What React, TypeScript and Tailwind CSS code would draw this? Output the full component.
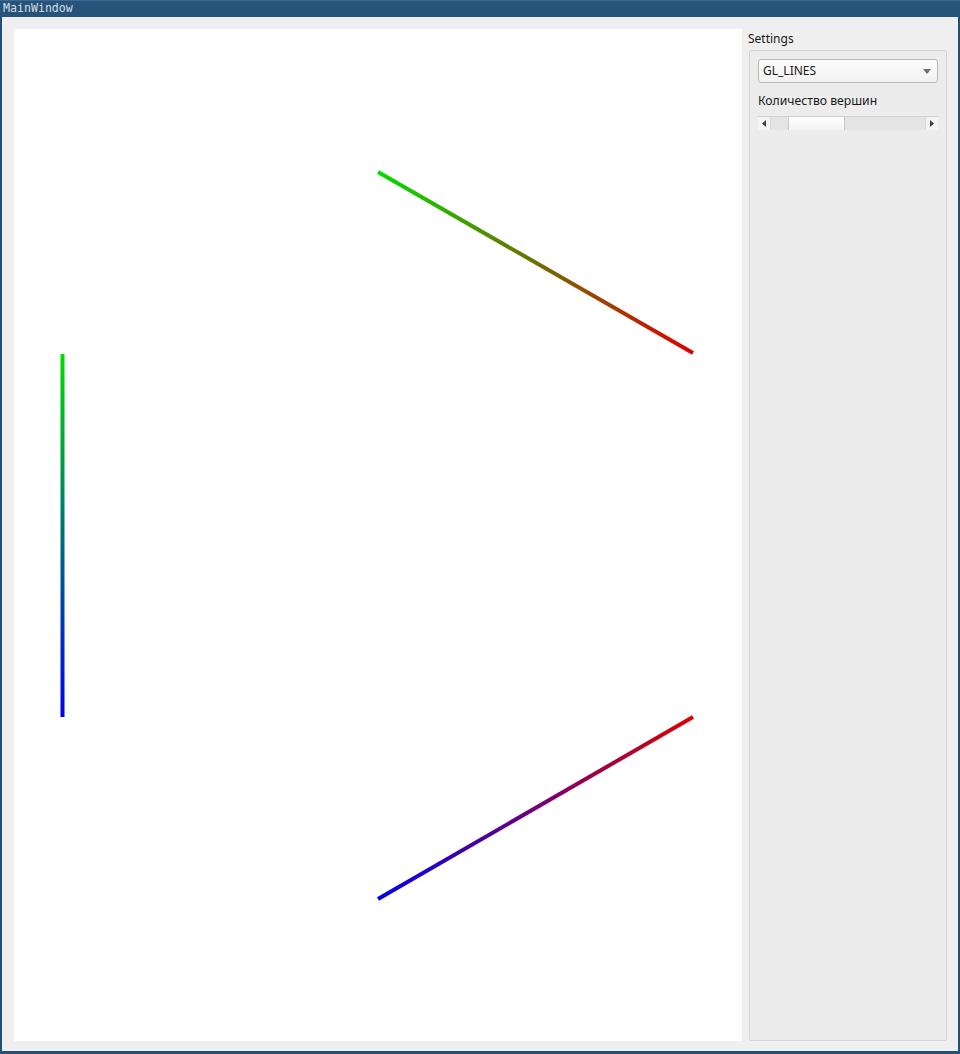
export default function App() {
  return (
    <div className="w-[960px] h-[1054px] flex flex-col bg-[#24507a] font-['Noto_Sans',sans-serif]">
      {/* Заголовок окна */}
      <div className="h-[17px] flex items-center px-[3px] border-t border-[#3a6a92] bg-[#26537a]">
        <span className="font-['DejaVu_Sans_Mono',monospace] text-[11.6px] leading-none text-[#d6dde5]">
          MainWindow
        </span>
      </div>

      <div className="flex-1 flex mx-[2px] mb-[3px] bg-[#efefef] pl-[12px] pt-[12px] pb-[10px] pr-[11px] gap-[6px]">
        {/* Холст OpenGL */}
        <div className="relative flex-1 bg-white">
          <svg className="absolute inset-0" width="728" height="1012">
            <defs>
              <linearGradient id="g1" gradientUnits="userSpaceOnUse" x1="48" y1="325" x2="48" y2="688">
                <stop offset="0" stopColor="#00dd00" />
                <stop offset="1" stopColor="#0000ee" />
              </linearGradient>
              <linearGradient id="g2" gradientUnits="userSpaceOnUse" x1="364" y1="143" x2="679" y2="324">
                <stop offset="0" stopColor="#00dd00" />
                <stop offset="1" stopColor="#e00000" />
              </linearGradient>
              <linearGradient id="g3" gradientUnits="userSpaceOnUse" x1="364" y1="870" x2="679" y2="688">
                <stop offset="0" stopColor="#0000ee" />
                <stop offset="1" stopColor="#e00000" />
              </linearGradient>
            </defs>
            <line x1="48.5" y1="325" x2="48.5" y2="688" stroke="url(#g1)" strokeWidth="4" />
            <line x1="364" y1="143" x2="679" y2="324" stroke="url(#g2)" strokeWidth="4" />
            <line x1="364" y1="870" x2="679" y2="688" stroke="url(#g3)" strokeWidth="4" />
          </svg>
        </div>

        {/* Панель настроек */}
        <div className="w-[199px] flex flex-col">
          <div className="text-[12px] leading-none text-[#1a1a1a] pt-[4px] h-[21px]">Settings</div>
          <div className="flex-1 ml-[1px] border border-[#d3d3d3] rounded-[2px] bg-[#ececec] px-[8px] pt-[8px] flex flex-col">
            <div className="h-[24px] rounded-[3px] border border-[#b8b8b8] bg-gradient-to-b from-[#fdfdfd] to-[#f2f2f2] flex items-center justify-between pl-[4px] pr-[6px]">
              <span className="text-[12px] text-[#1a1a1a]">GL_LINES</span>
              <svg width="8" height="5" viewBox="0 0 8 5">
                <path d="M0 0h8L4 5z" fill="#707070" />
              </svg>
            </div>
            <div className="mt-[12px] text-[12.2px] leading-none text-[#1a1a1a]">Количество вершин</div>
            <div className="mt-[9px] h-[14px] flex border-t border-[#d0d0d0] bg-[#e4e4e4]">
              <div className="w-[13px] flex items-center justify-center bg-[#f4f4f4] border-r border-[#d6d6d6]">
                <svg width="4" height="7" viewBox="0 0 4 7">
                  <path d="M4 0v7L0 3.5z" fill="#404040" />
                </svg>
              </div>
              <div className="flex-1 flex">
                <div className="w-[17px]" />
                <div className="w-[57px] bg-gradient-to-b from-[#ffffff] to-[#f4f4f4] border-x border-[#c8c8c8]" />
                <div className="flex-1" />
              </div>
              <div className="w-[13px] flex items-center justify-center bg-[#f4f4f4] border-l border-[#d6d6d6]">
                <svg width="4" height="7" viewBox="0 0 4 7">
                  <path d="M0 0v7L4 3.5z" fill="#404040" />
                </svg>
              </div>
            </div>
          </div>
        </div>
      </div>
    </div>
  )
}
